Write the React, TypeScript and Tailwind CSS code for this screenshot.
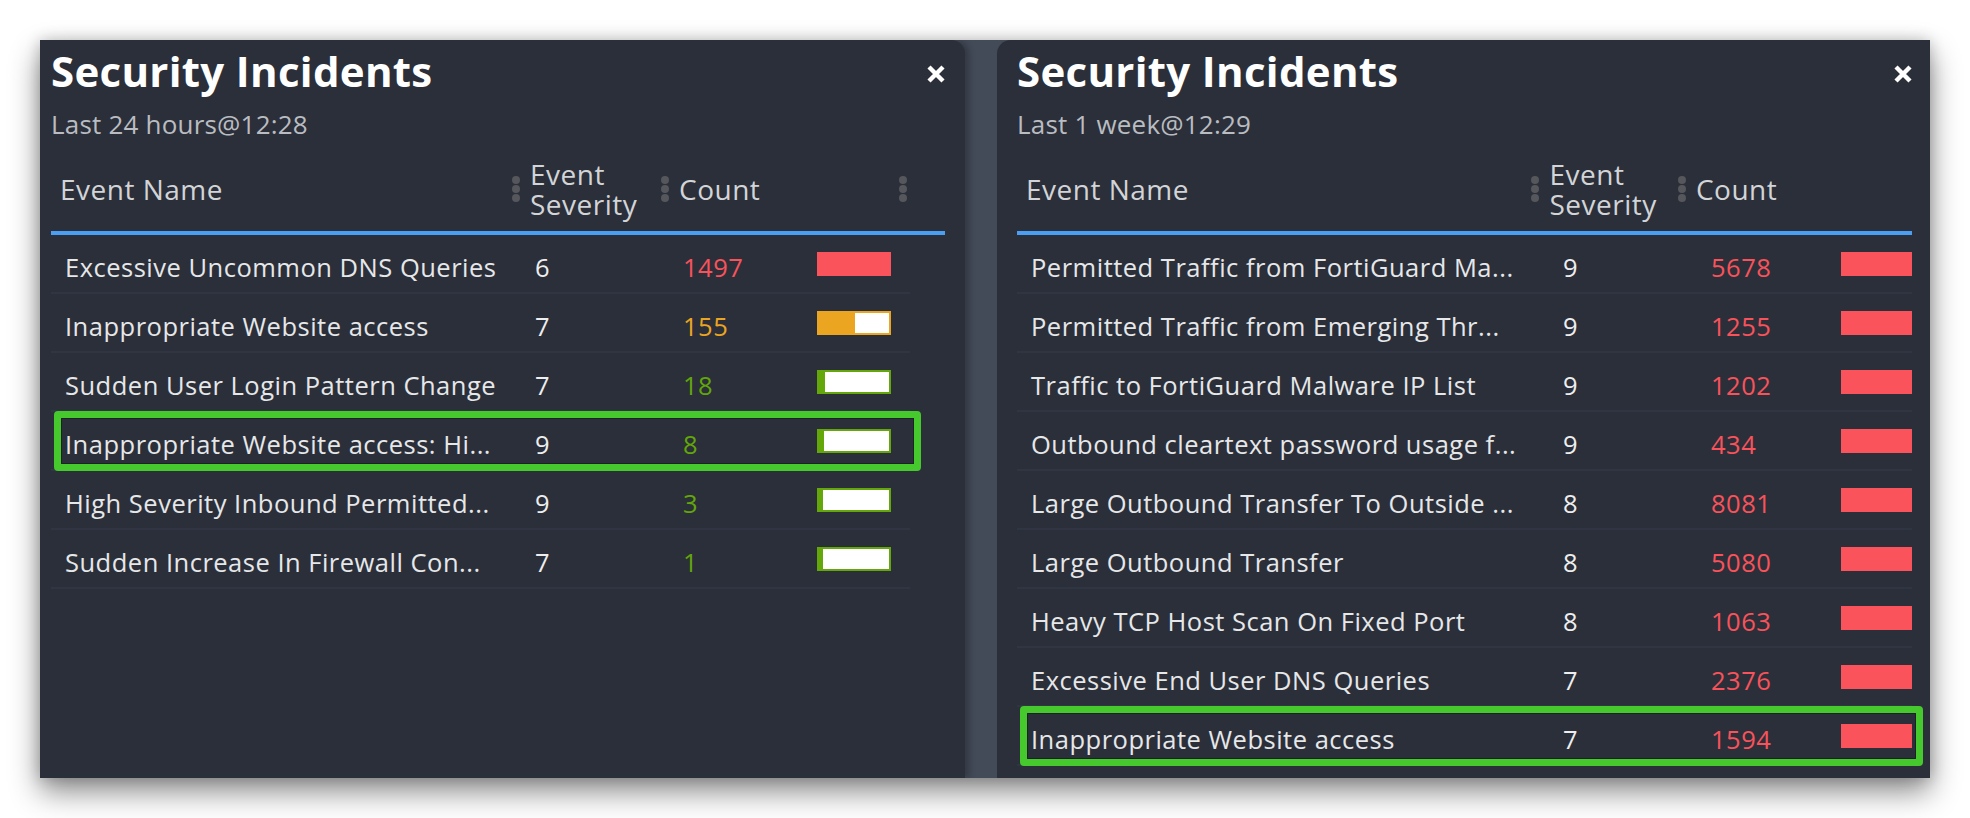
import React from "react";

type Row = {
  name: string;
  sev: number;
  count: number;
  tone: "red" | "orange" | "green";
  fill?: number;
  marked?: boolean;
};

const last24: Row[] = [
  { name: "Excessive Uncommon DNS Queries", sev: 6, count: 1497, tone: "red" },
  { name: "Inappropriate Website access", sev: 7, count: 155, tone: "orange", fill: 36 },
  { name: "Sudden User Login Pattern Change", sev: 7, count: 18, tone: "green", fill: 6 },
  { name: "Inappropriate Website access: Hi...", sev: 9, count: 8, tone: "green", fill: 5, marked: true },
  { name: "High Severity Inbound Permitted...", sev: 9, count: 3, tone: "green", fill: 4 },
  { name: "Sudden Increase In Firewall Con...", sev: 7, count: 1, tone: "green", fill: 4 },
];

const lastWeek: Row[] = [
  { name: "Permitted Traffic from FortiGuard Ma...", sev: 9, count: 5678, tone: "red" },
  { name: "Permitted Traffic from Emerging Thr...", sev: 9, count: 1255, tone: "red" },
  { name: "Traffic to FortiGuard Malware IP List", sev: 9, count: 1202, tone: "red" },
  { name: "Outbound cleartext password usage f...", sev: 9, count: 434, tone: "red" },
  { name: "Large Outbound Transfer To Outside ...", sev: 8, count: 8081, tone: "red" },
  { name: "Large Outbound Transfer", sev: 8, count: 5080, tone: "red" },
  { name: "Heavy TCP Host Scan On Fixed Port", sev: 8, count: 1063, tone: "red" },
  { name: "Excessive End User DNS Queries", sev: 7, count: 2376, tone: "red" },
  { name: "Inappropriate Website access", sev: 7, count: 1594, tone: "red", marked: true },
];

const countColor = {
  red: "text-[#f9525b]",
  orange: "text-[#eba521]",
  green: "text-[#62a60a]",
};

function Dots() {
  return (
    <div className="flex flex-col gap-[1px] shrink-0">
      <span className="w-[8px] h-[8px] rounded-full bg-[#55575c]" />
      <span className="w-[8px] h-[8px] rounded-full bg-[#55575c]" />
      <span className="w-[8px] h-[8px] rounded-full bg-[#55575c]" />
    </div>
  );
}

function Bar({ tone, fill, width }: { tone: Row["tone"]; fill?: number; width: number }) {
  if (tone === "red") {
    return <div className="h-[24px] bg-[#fa535b]" style={{ width }} />;
  }
  const border = tone === "orange" ? "border-[#eca521] bg-white" : "border-[#63a70b] bg-white";
  const inner = tone === "orange" ? "bg-[#eca521]" : "bg-[#63a70b]";
  return (
    <div className={`h-[24px] border-2 flex ${border}`} style={{ width }}>
      <div className={`h-full ${inner}`} style={{ width: fill }} />
    </div>
  );
}

function CloseX() {
  return (
    <svg width="20" height="20" viewBox="0 0 20 20" className="mt-[17px] -mr-[1px]">
      <path d="M3 3 L17 17 M17 3 L3 17" stroke="#ffffff" strokeWidth="4.4" />
    </svg>
  );
}

function Panel({
  sub,
  rows,
  cols,
  barW,
  tableW,
  trailingDots,
  className,
}: {
  sub: string;
  rows: Row[];
  cols: [number, number, number];
  barW: number;
  tableW: number;
  trailingDots?: boolean;
  className: string;
}) {
  const [nameW, sevW, countW] = cols;
  return (
    <div className={`bg-[#2b2f39] pt-[7px] ${className}`}>
      <div className="flex items-start justify-between">
        <h1 className="text-[42px] leading-[48px] font-bold tracking-[0.3px] text-white">Security Incidents</h1>
        <CloseX />
      </div>
      <div className="mt-[14px] text-[26px] leading-[30px] tracking-[0.2px] text-[#b9bcc1]">{sub}</div>

      {/* header */}
      <div className="mt-[7px] h-[89px] border-b-4 border-[#4a9ff5] flex items-center text-[28px] leading-[30px] tracking-[0.5px] text-[#d2d4d7]">
        <div className="pl-[9px] whitespace-nowrap" style={{ width: nameW }}>
          Event Name
        </div>
        <div className="flex items-center gap-[10px]" style={{ width: sevW }}>
          <Dots />
          <div className="whitespace-nowrap">
            Event
            <br />
            Severity
          </div>
        </div>
        <div className="flex items-center gap-[10px]" style={{ width: 238 }}>
          <Dots />
          <div>Count</div>
        </div>
        {trailingDots && <Dots />}
      </div>

      {/* rows */}
      <div style={{ width: tableW }}>
        {rows.map((r) => (
          <div
            key={r.name}
            className="relative h-[59px] border-b-2 border-[#2f3542] flex items-center text-[25.5px] leading-[35px] tracking-[0.5px]"
          >
            <div className="pl-[14px] pt-[7px] whitespace-nowrap text-[#e6e7e9]" style={{ width: nameW }}>
              {r.name}
            </div>
            <div className="pl-[23px] pt-[7px] text-[#eeeeee]" style={{ width: sevW }}>
              {r.sev}
            </div>
            <div className={`pl-[22px] pt-[7px] ${countColor[r.tone]}`} style={{ width: countW }}>
              {r.count}
            </div>
            <Bar tone={r.tone} fill={r.fill} width={barW} />
            {r.marked && (
              <div className="absolute left-[3px] -right-[11px] -top-[1px] -bottom-[2px] border-[7px] border-[#45c92c] rounded-[4px] shadow-[inset_0_0_0_1px_#1d2128]" />
            )}
          </div>
        ))}
      </div>
    </div>
  );
}

export default function App() {
  return (
    <div className="min-h-screen bg-white pt-[40px] pl-[40px] font-['Open_Sans',sans-serif]">
      <div className="flex w-[1890px] h-[738px] bg-[#434a58] overflow-hidden shadow-[0_14px_28px_rgba(0,0,0,0.45),0_0_14px_rgba(0,0,0,0.2)]">
        <Panel
          sub="Last 24 hours@12:28"
          rows={last24}
          cols={[461, 149, 156]}
          barW={74}
          tableW={859}
          trailingDots
          className="w-[925px] pl-[11px] pr-[20px] rounded-tr-[14px] shadow-[4px_0_6px_rgba(0,0,0,0.25)]"
        />
        <div className="w-[32px]" />
        <Panel
          sub="Last 1 week@12:29"
          rows={lastWeek}
          cols={[523, 149, 152]}
          barW={71}
          tableW={895}
          className="w-[933px] pl-[20px] pr-[18px] rounded-tl-[14px]"
        />
      </div>
    </div>
  );
}
